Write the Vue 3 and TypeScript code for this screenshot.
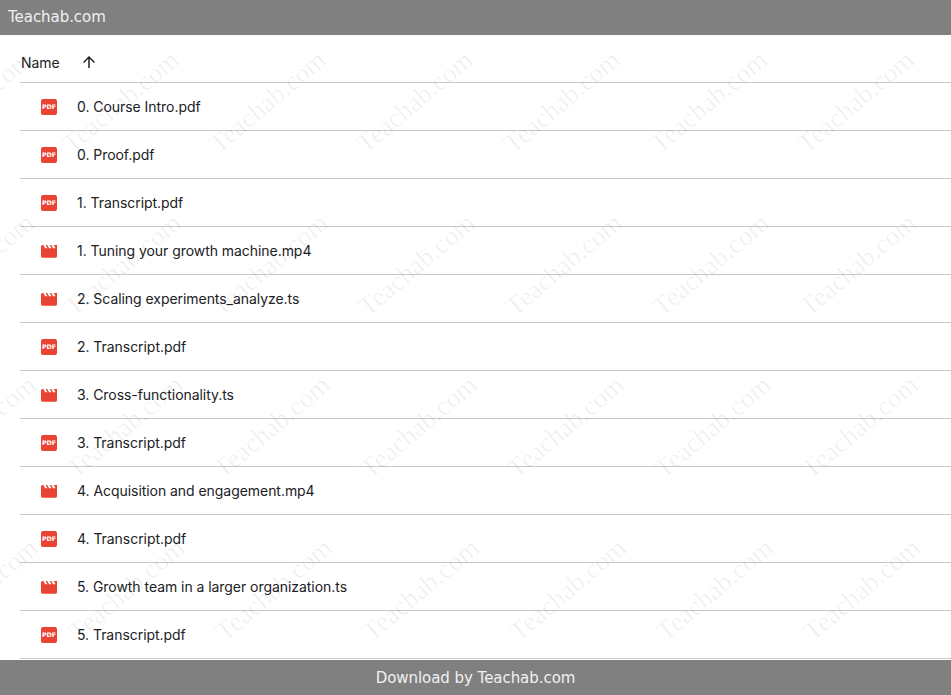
<script setup lang="ts">
interface FileRow {
  name: string
  kind: 'pdf' | 'video'
}

const files: FileRow[] = [
  { name: '0. Course Intro.pdf', kind: 'pdf' },
  { name: '0. Proof.pdf', kind: 'pdf' },
  { name: '1. Transcript.pdf', kind: 'pdf' },
  { name: '1. Tuning your growth machine.mp4', kind: 'video' },
  { name: '2. Scaling experiments_analyze.ts', kind: 'video' },
  { name: '2. Transcript.pdf', kind: 'pdf' },
  { name: '3. Cross-functionality.ts', kind: 'video' },
  { name: '3. Transcript.pdf', kind: 'pdf' },
  { name: '4. Acquisition and engagement.mp4', kind: 'video' },
  { name: '4. Transcript.pdf', kind: 'pdf' },
  { name: '5. Growth team in a larger organization.ts', kind: 'video' },
  { name: '5. Transcript.pdf', kind: 'pdf' }
]

// watermark tiles: 4 rows, 7 columns, drifting slightly to the right per row
const marks: { x: number; y: number }[] = []
for (let r = 0; r < 4; r++) {
  for (let c = 0; c < 7; c++) {
    marks.push({ x: -72 + c * 147 + r * 2, y: 96 + r * 162.7 })
  }
}
</script>

<template>
  <div class="page">
    <header class="top">Teachab.com</header>
    <main class="list">
      <div class="head">
        <span class="head-name">Name</span>
        <svg width="18" height="18" viewBox="0 0 24 24">
          <path d="M4 12l1.41 1.41L11 7.83V20h2V7.83l5.58 5.59L20 12l-8-8-8 8z" fill="#202124" />
        </svg>
      </div>
      <div v-for="f in files" :key="f.name" class="row">
        <svg v-if="f.kind === 'pdf'" class="icon" width="16" height="16" viewBox="0 0 16 16">
          <rect width="16" height="16" rx="2" fill="#ea4335" />
          <text x="8" y="10.4" text-anchor="middle" class="pdf">PDF</text>
        </svg>
        <svg v-else class="icon" width="16" height="16" viewBox="2 1.500 20 20">
          <path
            d="M18 4l2 4h-3l-2-4h-2l2 4h-3l-2-4H8l2 4H7L5 4H4c-1.100 0-1.990.9-1.990 2L2 18c0 1.100.9 2 2 2h16c1.100 0 2-.9 2-2V4h-4z"
            fill="#ea4335"
          />
        </svg>
        <span class="name">{{ f.name }}</span>
      </div>
    </main>
    <footer class="bottom">Download by Teachab.com</footer>
    <div class="marks">
      <span
        v-for="(m, i) in marks"
        :key="i"
        class="mark"
        :style="{ left: m.x + 'px', top: m.y + 'px' }"
      >Teachab.com</span>
    </div>
  </div>
</template>

<style>
html, body {
  margin: 0;
  overflow: hidden;
}
</style>

<style scoped>
.page {
  position: relative;
  width: 951px;
  height: 695px;
  display: flex;
  flex-direction: column;
  overflow: hidden;
  background: #fff;
  color: #202124;
  font-family: Inter, Roboto, sans-serif;
  letter-spacing: -0.05px;
}

.top {
  flex: none;
  height: 35px;
  line-height: 35px;
  padding-left: 8px;
  background: #808080;
  color: #f1f1f1;
  font-family: "DejaVu Sans", sans-serif;
  font-size: 15px;
}

.list {
  flex: 1;
  min-height: 0;
  overflow: hidden;
  padding-left: 20px;
  border-top: 3px solid #fdfdfd;
}

.head {
  height: 40px;
  padding-top: 4px;
  display: flex;
  align-items: center;
  border-bottom: 1px solid #c8c8c8;
  font-size: 14px;
}

.head-name {
  padding-left: 1px;
  width: 59px;
}

.row {
  height: 47px;
  display: flex;
  align-items: center;
  border-bottom: 1px solid #c8c8c8;
  padding-left: 21px;
  font-size: 14px;
}

.icon {
  flex: none;
  margin-right: 20px;
}

.pdf {
  fill: #fff;
  font-family: "DejaVu Sans", sans-serif;
  font-size: 6.300px;
  font-weight: 700;
}

.bottom {
  flex: none;
  height: 35px;
  line-height: 36px;
  text-align: center;
  background: #808080;
  color: #f1f1f1;
  font-family: "DejaVu Sans", sans-serif;
  font-size: 15px;
}

.marks {
  position: absolute;
  inset: 35px 0 35px 0;
  overflow: hidden;
  pointer-events: none;
}

.mark {
  position: absolute;
  transform: rotate(-40deg);
  transform-origin: 0 100%;
  font-family: "Liberation Serif", serif;
  font-size: 27px;
  line-height: 1;
  color: rgba(0, 0, 0, 0.06);
  white-space: nowrap;
}
</style>
